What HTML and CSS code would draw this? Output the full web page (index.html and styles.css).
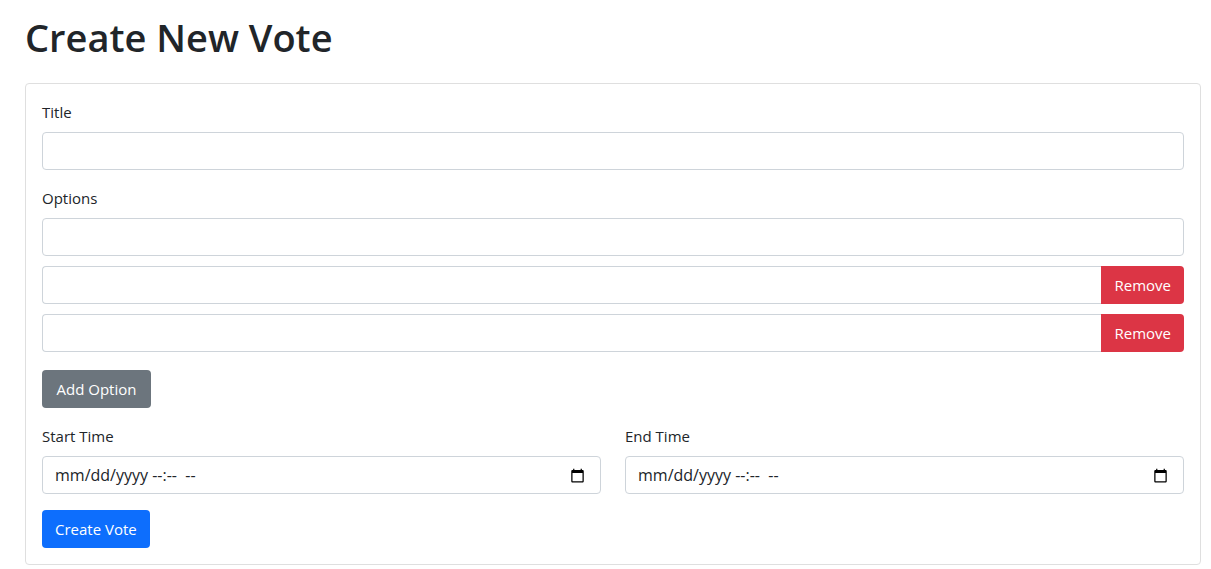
FILE: index.html
```html
<!DOCTYPE html>
<html lang="en">
<head>
<meta charset="utf-8">
<meta name="viewport" content="width=device-width, initial-scale=1">
<title>Create New Vote</title>
<link rel="stylesheet" href="styles.css">
</head>
<body>
<main class="page">
  <h1 class="page-title">Create New Vote</h1>
  <form class="card">
    <div class="field">
      <label class="form-label" for="title">Title</label>
      <input class="form-control" id="title" type="text">
    </div>
    <fieldset class="options">
      <legend class="form-label">Options</legend>
      <div class="option-list">
        <input class="form-control" type="text" aria-label="Option 1">
        <div class="input-group">
          <input class="form-control" type="text" aria-label="Option 2">
          <button class="btn btn-danger" type="button">Remove</button>
        </div>
        <div class="input-group">
          <input class="form-control" type="text" aria-label="Option 3">
          <button class="btn btn-danger" type="button">Remove</button>
        </div>
      </div>
    </fieldset>
    <button class="btn btn-secondary" type="button">Add Option</button>
    <div class="times">
      <div class="field">
        <label class="form-label" for="start">Start Time</label>
        <div class="form-control datetime">
          <input class="datetime-input" id="start" type="text" placeholder="mm/dd/yyyy --:--  --">
          <button class="datetime-picker" type="button" aria-label="Pick start time">
            <svg class="calendar" viewBox="0 0 24 24" aria-hidden="true"><path d="M20 3h-1V1h-2v2H7V1H5v2H4c-1.100 0-2 .9-2 2v16c0 1.100.9 2 2 2h16c1.100 0 2-.9 2-2V5c0-1.100-.9-2-2-2zm0 18H4V8h16v13z"/></svg>
          </button>
        </div>
      </div>
      <div class="field">
        <label class="form-label" for="end">End Time</label>
        <div class="form-control datetime">
          <input class="datetime-input" id="end" type="text" placeholder="mm/dd/yyyy --:--  --">
          <button class="datetime-picker" type="button" aria-label="Pick end time">
            <svg class="calendar" viewBox="0 0 24 24" aria-hidden="true"><path d="M20 3h-1V1h-2v2H7V1H5v2H4c-1.100 0-2 .9-2 2v16c0 1.100.9 2 2 2h16c1.100 0 2-.9 2-2V5c0-1.100-.9-2-2-2zm0 18H4V8h16v13z"/></svg>
          </button>
        </div>
      </div>
    </div>
    <button class="btn btn-primary" type="submit">Create Vote</button>
  </form>
</main>
</body>
</html>
```
FILE: styles.css
```css
* {
  box-sizing: border-box;
}

body {
  margin: 0;
  background: #fff;
  color: #212529;
  font: 400 15px/24px "Open Sans", "Noto Sans", sans-serif;
}

.page {
  padding: 13px 10px 4px 25px;
}

.page-title {
  margin: 0 0 22px;
  font-size: 38px;
  line-height: 48px;
  font-weight: 600;
}

.card {
  padding: 16px;
  border: 1px solid #dfdfdf;
  border-radius: 4px;
}

.form-label {
  display: block;
  margin-bottom: 8px;
  padding: 0;
}

.form-control {
  display: block;
  width: 100%;
  min-width: 0;
  height: 38px;
  padding: 6px 12px;
  border: 1px solid #ced4da;
  border-radius: 4px;
  background: #fff;
  color: #212529;
  font: inherit;
}

.options {
  min-width: 0;
  margin: 16px 0 18px;
  padding: 0;
  border: 0;
}

.option-list {
  display: grid;
  gap: 10px;
}

.input-group {
  display: flex;
}

.input-group .form-control {
  flex: 1;
  border-right: 0;
  border-radius: 4px 0 0 4px;
}

.input-group .btn {
  border-radius: 0 4px 4px 0;
}

.btn {
  display: inline-block;
  height: 38px;
  padding: 6px 12px;
  border: 1px solid transparent;
  border-radius: 4px;
  color: #fff;
  font: inherit;
  cursor: pointer;
}

.btn-danger {
  background-color: #dc3545;
}

.btn-secondary {
  min-width: 109px;
  background-color: #6c757d;
}

.btn-primary {
  background-color: #0d6efd;
}

.times {
  display: grid;
  grid-template-columns: 1fr 1fr;
  gap: 24px;
  margin: 16px 0;
}

.datetime {
  display: flex;
  align-items: center;
  font-size: 16px;
}

.datetime-input {
  flex: 1;
  min-width: 0;
  padding: 0;
  border: 0;
  outline: 0;
  background: transparent;
  color: inherit;
  font: inherit;
}

.datetime-input::placeholder {
  color: #212529;
  opacity: 1;
}

.datetime-picker {
  display: flex;
  padding: 3px;
  border: 0;
  background: transparent;
  cursor: pointer;
}

.calendar {
  width: 15px;
  height: 15px;
  fill: #000;
}
```
